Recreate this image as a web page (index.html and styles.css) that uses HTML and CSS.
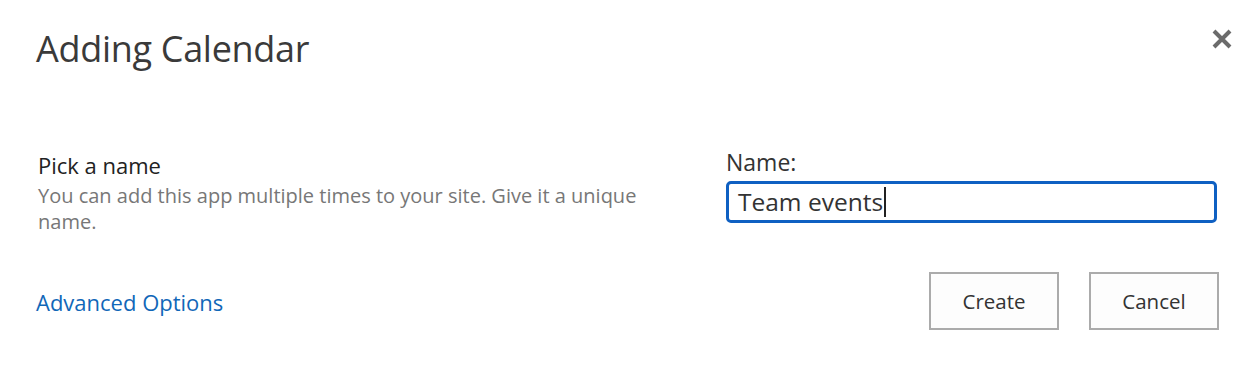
FILE: index.html
```html
<!DOCTYPE html>
<html>
<head>
<meta charset="utf-8">
<link rel="stylesheet" href="styles.css">
</head>
<body>
<div class="dialog">
  <div class="header">
    <h1 class="title">Adding Calendar</h1>
    <button class="close" aria-label="Close">
      <svg width="20" height="20" viewBox="0 0 20 20"><path d="M2 2 L18 18 M18 2 L2 18" stroke="#6b6b6b" stroke-width="4" stroke-linecap="butt"/></svg>
    </button>
  </div>
  <div class="section">
    <div class="desc-col">
      <div class="sec-title">Pick a name</div>
      <div class="sec-text">You can add this app multiple times to your site. Give it a unique name.</div>
    </div>
    <div class="field-col">
      <label class="field-label">Name:</label>
      <div class="input">Team events<span class="caret"></span></div>
    </div>
  </div>
  <div class="footer">
    <a class="adv" href="#">Advanced Options</a>
    <div class="buttons">
      <button class="btn">Create</button>
      <button class="btn">Cancel</button>
    </div>
  </div>
</div>
</body>
</html>
```
FILE: styles.css
```css
html, body {
  margin: 0;
  background: #ffffff;
}
body {
  font-family: "Open Sans", "DejaVu Sans", sans-serif;
  color: #333333;
}
.dialog {
  width: 1260px;
  height: 386px;
  box-sizing: border-box;
  padding: 22px 43px 0 36px;
}
.header {
  display: flex;
  justify-content: space-between;
  align-items: flex-start;
}
.title {
  margin: 0;
  font-weight: 400;
  font-size: 36px;
  line-height: 54px;
  color: #3a3a3a;
  letter-spacing: -0.3px;
}
.close {
  border: 0;
  background: none;
  padding: 0;
  margin: 7px -15px 0 0;
  width: 20px;
  height: 20px;
  display: flex;
}
.section {
  display: flex;
  margin-top: 72px;
}
.desc-col {
  width: 650px;
  padding-left: 2px;
  padding-top: 3px;
}
.sec-title {
  font-size: 22px;
  line-height: 28px;
  color: #222222;
}
.sec-text {
  font-size: 20px;
  line-height: 26px;
  color: #777777;
  margin-top: 4px;
}
.field-col {
  margin-left: 38px;
  flex: 1;
}
.field-label {
  display: block;
  font-size: 23px;
  line-height: 28px;
  color: #333333;
}
.input {
  margin-top: 5px;
  height: 42px;
  box-sizing: border-box;
  border: 3px solid #0f60c2;
  border-radius: 5px;
  padding: 0 9px;
  font-size: 24.5px;
  line-height: 36px;
  color: #333333;
  display: flex;
  align-items: center;
}
.caret {
  display: inline-block;
  width: 1.5px;
  height: 30px;
  background: #222;
  margin-left: 1px;
}
.footer {
  display: flex;
  justify-content: space-between;
  align-items: center;
  margin-top: 37px;
  margin-right: -2px;
}
.adv {
  font-size: 22px;
  color: #1167b8;
  text-decoration: none;
  margin-top: 2px;
}
.buttons {
  display: flex;
  gap: 30px;
}
.btn {
  width: 130px;
  height: 58px;
  box-sizing: border-box;
  border: 2px solid #ababab;
  background: #fdfdfd;
  font-family: "Open Sans", "DejaVu Sans", sans-serif;
  font-size: 20.5px;
  color: #333333;
  padding: 0;
}
```
